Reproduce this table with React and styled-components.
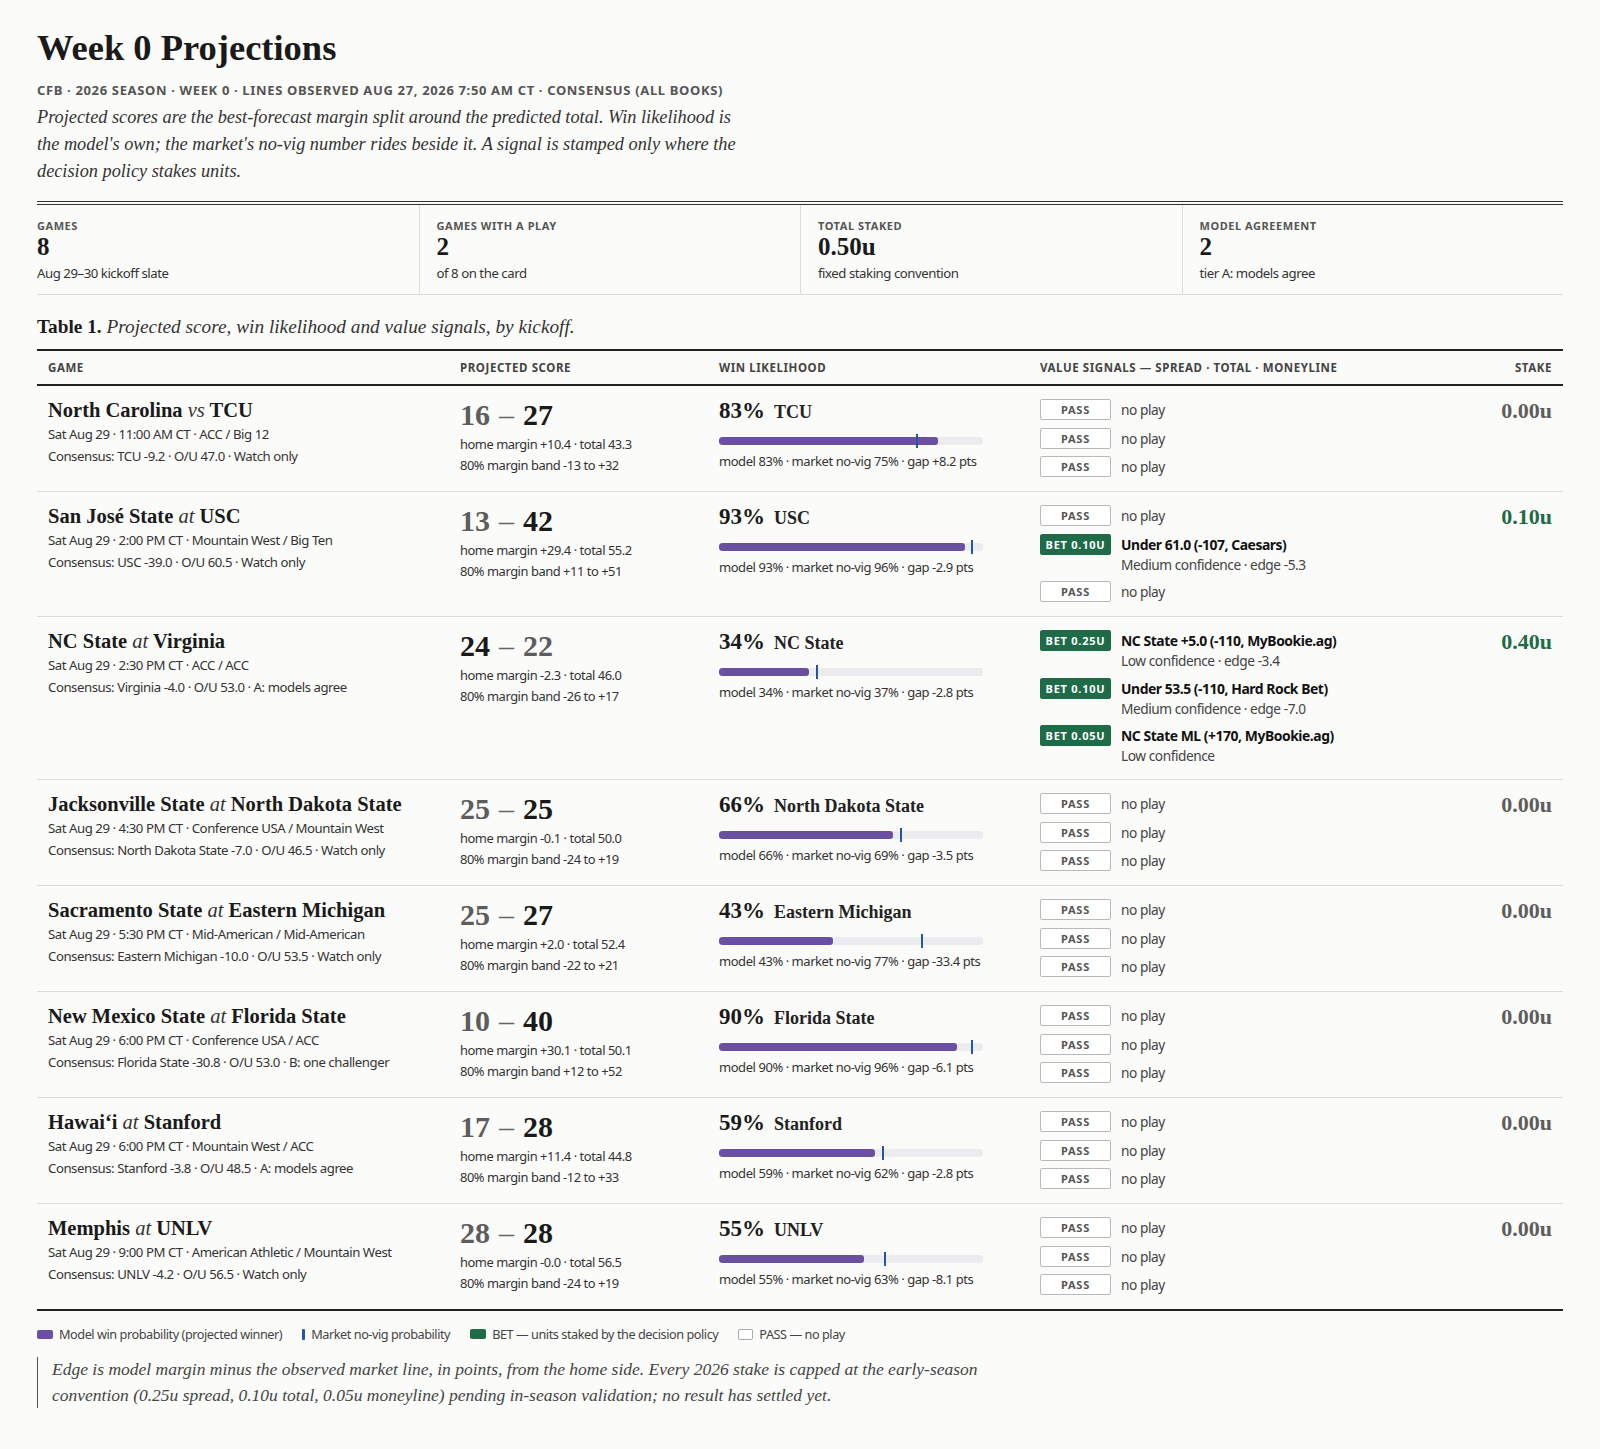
import React from "react";
import styled, { createGlobalStyle } from "styled-components";

const SANS = `"Noto Sans", "Liberation Sans", sans-serif`;
const SERIF = `"Liberation Serif", "Times New Roman", serif`;

const Global = createGlobalStyle`
  html, body { margin: 0; padding: 0; background: #fbfbf9; }
  body { font-family: ${SANS}; font-stretch: condensed; color: #1a1a1a; }
  * { box-sizing: border-box; }
`;

const Page = styled.div`
  padding: 27px 37px 44px;
`;

const Title = styled.h1`
  margin: 0 0 12px;
  font-family: ${SERIF};
  font-weight: 700;
  font-size: 36.5px;
  line-height: 42px;
  color: #1a1a1a;
`;

const Meta = styled.div`
  font-size: 13px;
  line-height: 18px;
  font-weight: 700;
  letter-spacing: 0.05em;
  text-transform: uppercase;
  color: #555;
`;

const Lede = styled.p`
  margin: 5px 0 16px;
  max-width: 714px;
  font-family: ${SERIF};
  font-style: italic;
  font-size: 18.3px;
  line-height: 27px;
  color: #333;
`;

const Stats = styled.div`
  display: grid;
  grid-template-columns: repeat(4, 1fr);
  border-top: 4px double #333;
  border-bottom: 1px solid #dcdcdc;
`;

const Stat = styled.div`
  padding: 13px 17px 11px;
  &:first-child { padding-left: 0; }
  & + & { border-left: 1px solid #dcdcdc; }
`;

const StatLabel = styled.div`
  font-size: 11px;
  line-height: 16px;
  font-weight: 700;
  letter-spacing: 0.05em;
  text-transform: uppercase;
  color: #555;
`;

const StatValue = styled.div`
  font-family: ${SERIF};
  font-weight: 700;
  font-size: 25px;
  line-height: 26px;
  color: #1a1a1a;
`;

const StatSub = styled.div`
  margin-top: 3px;
  font-size: 13.2px;
  letter-spacing: -0.45px;
  line-height: 20px;
  color: #333;
`;

const Caption = styled.div`
  margin: 20px 0 10px;
  font-family: ${SERIF};
  font-size: 19.3px;
  line-height: 24px;
  color: #1a1a1a;
  b { font-weight: 700; }
  i { color: #333; }
`;

const Table = styled.div`
  border-top: 2px solid #222;
  border-bottom: 2px solid #222;
`;

const COLS = "412px 259px 321px 1fr 120px";

const HeadRow = styled.div`
  display: grid;
  grid-template-columns: ${COLS};
  border-bottom: 2px solid #222;
`;

const HeadCell = styled.div`
  padding: 9px 11px 8px;
  font-size: 11.5px;
  line-height: 16px;
  font-weight: 700;
  letter-spacing: 0.05em;
  text-transform: uppercase;
  color: #444;
  text-align: ${(p) => (p.$right ? "right" : "left")};
`;

const Row = styled.div`
  display: grid;
  grid-template-columns: ${COLS};
  border-bottom: 1px solid #dcdcdc;
  &:last-child { border-bottom: none; }
`;

const Cell = styled.div`
  padding: 13px 11px 14px;
  text-align: ${(p) => (p.$right ? "right" : "left")};
`;

const GameName = styled.div`
  font-family: ${SERIF};
  font-weight: 700;
  font-size: 20.5px;
  line-height: 22px;
  color: #1a1a1a;
  i { font-weight: 400; color: #333; }
`;

const SubLine = styled.div`
  font-size: ${(p) => p.$fs || 13.2}px;
  letter-spacing: -0.45px;
  line-height: ${(p) => p.$lh || 22}px;
  color: #333;
  white-space: nowrap;
`;

const SubBlock = styled.div`
  margin-top: ${(p) => p.$mt}px;
`;

const Score = styled.div`
  font-family: ${SERIF};
  font-weight: 700;
  font-size: 30px;
  line-height: 32px;
`;

const ScoreNum = styled.span`
  color: ${(p) => (p.$win ? "#1a1a1a" : "#5d5d5d")};
`;

const Dash = styled.span`
  font-weight: 400;
  color: #666;
  margin: 0 9px;
`;

const WinHead = styled.div`
  font-family: ${SERIF};
  line-height: 24px;
  white-space: nowrap;
`;

const Pct = styled.span`
  font-weight: 700;
  font-size: 23px;
`;

const WinTeam = styled.span`
  font-weight: 700;
  font-size: 18px;
  margin-left: 9px;
  color: #222;
`;

const BarWrap = styled.div`
  position: relative;
  margin-top: 9px;
  width: 264px;
  height: 14px;
  display: flex;
  align-items: center;
`;

const Track = styled.div`
  width: 100%;
  height: 8px;
  border-radius: 3px;
  background: #ececef;
  overflow: hidden;
`;

const Fill = styled.div`
  height: 100%;
  border-radius: 3px;
  background: #6a4fa3;
`;

const Tick = styled.div`
  position: absolute;
  top: 0;
  width: 2px;
  height: 14px;
  margin-left: -1px;
  background: #2456a6;
`;

const BarCaption = styled.div`
  margin-top: 4px;
  font-size: 13px;
  letter-spacing: -0.45px;
  line-height: 18px;
  color: #333;
  white-space: nowrap;
`;

const Signals = styled.div`
  display: flex;
  flex-direction: column;
  gap: 7.5px;
`;

const Signal = styled.div`
  display: grid;
  grid-template-columns: 71px 1fr;
  column-gap: 10px;
`;

const Tag = styled.div`
  height: 21px;
  border: 1px solid ${(p) => (p.$bet ? "#1d6b47" : "#b9b9b9")};
  border-radius: 2px;
  background: ${(p) => (p.$bet ? "#1d6b47" : "#fff")};
  color: ${(p) => (p.$bet ? "#fff" : "#555")};
  font-size: 11px;
  font-weight: 700;
  letter-spacing: 0.07em;
  line-height: 19px;
  text-align: center;
  text-transform: uppercase;
`;

const SignalText = styled.div`
  font-size: ${(p) => (p.$bold ? 13.9 : 13.7)}px;
  letter-spacing: -0.45px;
  line-height: 21px;
  color: ${(p) => (p.$bold ? "#111" : "#444")};
  font-weight: ${(p) => (p.$bold ? 700 : 400)};
`;

const SignalSub = styled.div`
  grid-column: 2;
  font-size: 13.7px;
  letter-spacing: -0.45px;
  line-height: 19px;
  color: #444;
`;

const Stake = styled.div`
  font-family: ${SERIF};
  font-weight: 700;
  font-size: 22px;
  line-height: 24px;
  color: ${(p) => (p.$on ? "#1d6b47" : "#5d5d5d")};
`;

const Legend = styled.div`
  display: flex;
  align-items: center;
  gap: 20px;
  margin-top: 14px;
  font-size: 12.7px;
  letter-spacing: -0.45px;
  line-height: 18px;
  color: #444;
`;

const LegendItem = styled.div`
  display: flex;
  align-items: center;
  gap: 6px;
`;

const Swatch = styled.span`
  display: inline-block;
  ${(p) =>
    p.$kind === "model"
      ? "width: 16px; height: 9px; border-radius: 2px; background: #6a4fa3;"
      : p.$kind === "market"
      ? "width: 3px; height: 11px; border-radius: 1px; background: #2456a6;"
      : p.$kind === "bet"
      ? "width: 16px; height: 10px; border-radius: 2px; background: #1d6b47;"
      : "width: 15px; height: 11px; border-radius: 2px; background: #fff; border: 1px solid #aaa;"}
`;

const Note = styled.p`
  margin: 14px 0 0;
  max-width: 965px;
  padding-left: 14px;
  border-left: 1.5px solid #555;
  font-family: ${SERIF};
  font-style: italic;
  font-size: 17.5px;
  line-height: 25.5px;
  color: #444;
`;

const games = [
  {
    away: "North Carolina", sep: "vs", home: "TCU",
    when: "Sat Aug 29 · 11:00 AM CT · ACC / Big 12",
    cons: "Consensus: TCU -9.2 · O/U 47.0 · Watch only",
    a: 16, h: 27, winner: "h",
    margin: "home margin +10.4 · total 43.3", band: "80% margin band -13 to +32",
    pct: 83, team: "TCU", mkt: 75, gap: "+8.2",
    signals: [null, null, null], stake: "0.00u",
  },
  {
    away: "San José State", sep: "at", home: "USC",
    when: "Sat Aug 29 · 2:00 PM CT · Mountain West / Big Ten",
    cons: "Consensus: USC -39.0 · O/U 60.5 · Watch only",
    a: 13, h: 42, winner: "h",
    margin: "home margin +29.4 · total 55.2", band: "80% margin band +11 to +51",
    pct: 93, team: "USC", mkt: 96, gap: "-2.9",
    signals: [null, { u: "0.10U", t: "Under 61.0 (-107, Caesars)", s: "Medium confidence · edge -5.3" }, null],
    stake: "0.10u",
  },
  {
    away: "NC State", sep: "at", home: "Virginia",
    when: "Sat Aug 29 · 2:30 PM CT · ACC / ACC",
    cons: "Consensus: Virginia -4.0 · O/U 53.0 · A: models agree",
    a: 24, h: 22, winner: "a",
    margin: "home margin -2.3 · total 46.0", band: "80% margin band -26 to +17",
    pct: 34, team: "NC State", mkt: 37, gap: "-2.8",
    signals: [
      { u: "0.25U", t: "NC State +5.0 (-110, MyBookie.ag)", s: "Low confidence · edge -3.4" },
      { u: "0.10U", t: "Under 53.5 (-110, Hard Rock Bet)", s: "Medium confidence · edge -7.0" },
      { u: "0.05U", t: "NC State ML (+170, MyBookie.ag)", s: "Low confidence" },
    ],
    stake: "0.40u",
  },
  {
    away: "Jacksonville State", sep: "at", home: "North Dakota State",
    when: "Sat Aug 29 · 4:30 PM CT · Conference USA / Mountain West",
    cons: "Consensus: North Dakota State -7.0 · O/U 46.5 · Watch only",
    a: 25, h: 25, winner: "h",
    margin: "home margin -0.1 · total 50.0", band: "80% margin band -24 to +19",
    pct: 66, team: "North Dakota State", mkt: 69, gap: "-3.5",
    signals: [null, null, null], stake: "0.00u",
  },
  {
    away: "Sacramento State", sep: "at", home: "Eastern Michigan",
    when: "Sat Aug 29 · 5:30 PM CT · Mid-American / Mid-American",
    cons: "Consensus: Eastern Michigan -10.0 · O/U 53.5 · Watch only",
    a: 25, h: 27, winner: "h",
    margin: "home margin +2.0 · total 52.4", band: "80% margin band -22 to +21",
    pct: 43, team: "Eastern Michigan", mkt: 77, gap: "-33.4",
    signals: [null, null, null], stake: "0.00u",
  },
  {
    away: "New Mexico State", sep: "at", home: "Florida State",
    when: "Sat Aug 29 · 6:00 PM CT · Conference USA / ACC",
    cons: "Consensus: Florida State -30.8 · O/U 53.0 · B: one challenger",
    a: 10, h: 40, winner: "h",
    margin: "home margin +30.1 · total 50.1", band: "80% margin band +12 to +52",
    pct: 90, team: "Florida State", mkt: 96, gap: "-6.1",
    signals: [null, null, null], stake: "0.00u",
  },
  {
    away: "Hawaiʻi", sep: "at", home: "Stanford",
    when: "Sat Aug 29 · 6:00 PM CT · Mountain West / ACC",
    cons: "Consensus: Stanford -3.8 · O/U 48.5 · A: models agree",
    a: 17, h: 28, winner: "h",
    margin: "home margin +11.4 · total 44.8", band: "80% margin band -12 to +33",
    pct: 59, team: "Stanford", mkt: 62, gap: "-2.8",
    signals: [null, null, null], stake: "0.00u",
  },
  {
    away: "Memphis", sep: "at", home: "UNLV",
    when: "Sat Aug 29 · 9:00 PM CT · American Athletic / Mountain West",
    cons: "Consensus: UNLV -4.2 · O/U 56.5 · Watch only",
    a: 28, h: 28, winner: "h",
    margin: "home margin -0.0 · total 56.5", band: "80% margin band -24 to +19",
    pct: 55, team: "UNLV", mkt: 63, gap: "-8.1",
    signals: [null, null, null], stake: "0.00u",
  },
];

function GameRow({ g }) {
  return (
    <Row>
      <Cell>
        <GameName>
          {g.away} <i>{g.sep}</i> {g.home}
        </GameName>
        <SubBlock $mt={2}>
          <SubLine>{g.when}</SubLine>
          <SubLine>{g.cons}</SubLine>
        </SubBlock>
      </Cell>
      <Cell>
        <Score>
          <ScoreNum $win={g.winner === "a"}>{g.a}</ScoreNum>
          <Dash>–</Dash>
          <ScoreNum $win={g.winner === "h"}>{g.h}</ScoreNum>
        </Score>
        <SubBlock $mt={3}>
          <SubLine $lh={21} $fs={12.9}>{g.margin}</SubLine>
          <SubLine $lh={21} $fs={12.9}>{g.band}</SubLine>
        </SubBlock>
      </Cell>
      <Cell>
        <WinHead>
          <Pct>{g.pct}%</Pct>
          <WinTeam>{g.team}</WinTeam>
        </WinHead>
        <BarWrap>
          <Track>
            <Fill style={{ width: `${g.pct}%` }} />
          </Track>
          <Tick style={{ left: `${g.mkt}%` }} />
        </BarWrap>
        <BarCaption>
          model {g.pct}% · market no-vig {g.mkt}% · gap {g.gap} pts
        </BarCaption>
      </Cell>
      <Cell>
        <Signals>
          {g.signals.map((s, i) =>
            s ? (
              <Signal key={i}>
                <Tag $bet>BET {s.u}</Tag>
                <SignalText $bold>{s.t}</SignalText>
                <SignalSub>{s.s}</SignalSub>
              </Signal>
            ) : (
              <Signal key={i}>
                <Tag>Pass</Tag>
                <SignalText>no play</SignalText>
              </Signal>
            )
          )}
        </Signals>
      </Cell>
      <Cell $right>
        <Stake $on={g.stake !== "0.00u"}>{g.stake}</Stake>
      </Cell>
    </Row>
  );
}

export default function App() {
  return (
    <>
      <Global />
      <Page>
        <Title>Week 0 Projections</Title>
        <Meta>
          CFB · 2026 Season · Week 0 · Lines observed Aug 27, 2026 7:50 AM CT · Consensus (all books)
        </Meta>
        <Lede>
          Projected scores are the best-forecast margin split around the predicted total. Win likelihood is
          the model's own; the market's no-vig number rides beside it. A signal is stamped only where the
          decision policy stakes units.
        </Lede>

        <Stats>
          <Stat>
            <StatLabel>Games</StatLabel>
            <StatValue>8</StatValue>
            <StatSub>Aug 29–30 kickoff slate</StatSub>
          </Stat>
          <Stat>
            <StatLabel>Games with a play</StatLabel>
            <StatValue>2</StatValue>
            <StatSub>of 8 on the card</StatSub>
          </Stat>
          <Stat>
            <StatLabel>Total staked</StatLabel>
            <StatValue>0.50u</StatValue>
            <StatSub>fixed staking convention</StatSub>
          </Stat>
          <Stat>
            <StatLabel>Model agreement</StatLabel>
            <StatValue>2</StatValue>
            <StatSub>tier A: models agree</StatSub>
          </Stat>
        </Stats>

        <Caption>
          <b>Table 1.</b> <i>Projected score, win likelihood and value signals, by kickoff.</i>
        </Caption>

        <Table>
          <HeadRow>
            <HeadCell>Game</HeadCell>
            <HeadCell>Projected score</HeadCell>
            <HeadCell>Win likelihood</HeadCell>
            <HeadCell>Value signals — spread · total · moneyline</HeadCell>
            <HeadCell $right>Stake</HeadCell>
          </HeadRow>
          {games.map((g, i) => (
            <GameRow key={i} g={g} />
          ))}
        </Table>

        <Legend>
          <LegendItem>
            <Swatch $kind="model" />
            Model win probability (projected winner)
          </LegendItem>
          <LegendItem>
            <Swatch $kind="market" />
            Market no-vig probability
          </LegendItem>
          <LegendItem>
            <Swatch $kind="bet" />
            BET — units staked by the decision policy
          </LegendItem>
          <LegendItem>
            <Swatch $kind="pass" />
            PASS — no play
          </LegendItem>
        </Legend>

        <Note>
          Edge is model margin minus the observed market line, in points, from the home side. Every 2026 stake is
          capped at the early-season convention (0.25u spread, 0.10u total, 0.05u moneyline) pending in-season
          validation; no result has settled yet.
        </Note>
      </Page>
    </>
  );
}
